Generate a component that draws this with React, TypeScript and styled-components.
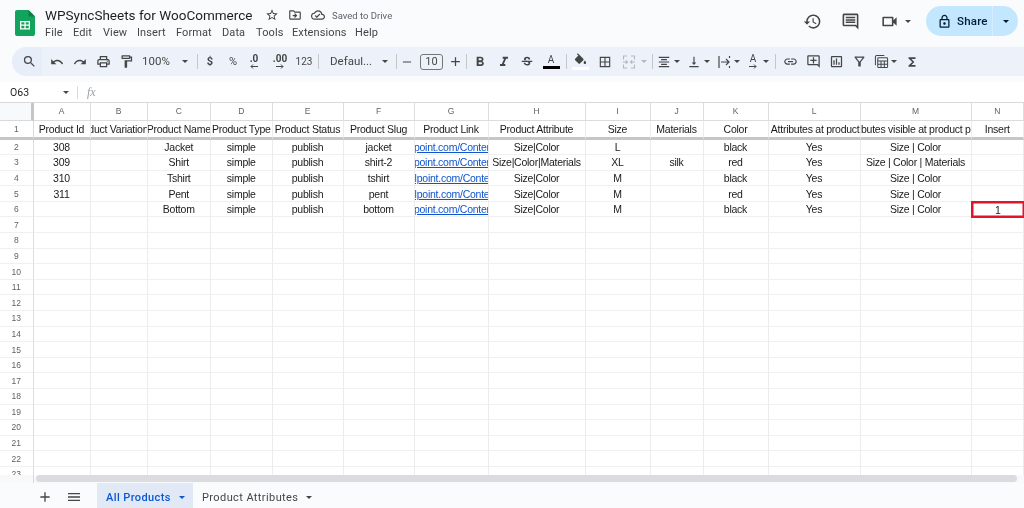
import React from "react";
import styled, { createGlobalStyle } from "styled-components";
import {
  MdSearch, MdUndo, MdRedo, MdOutlinePrint, MdOutlineFormatPaint, MdAdd, MdRemove, MdFormatBold,
  MdFormatItalic, MdStrikethroughS, MdBorderAll, MdFormatAlignCenter, MdVerticalAlignBottom, MdLink,
  MdOutlineAddComment, MdOutlineInsertChart, MdOutlineFilterAlt, MdFunctions, MdHistory, MdOutlineComment,
  MdOutlineVideocam, MdOutlineLock, MdStarBorder, MdOutlineDriveFileMove, MdOutlineCloudDone, MdMenu,
} from "react-icons/md";

const Global = createGlobalStyle`
  html, body { margin: 0; padding: 0; background: #fff; overflow: hidden; }
  * { box-sizing: border-box; }
`;

const Page = styled.div`
  width: 1024px; height: 508px; overflow: hidden; display: flex; flex-direction: column;
  background: #f9fbfd; font-family: Roboto, "Open Sans", sans-serif; color: #1f1f1f;
  filter: blur(0.3px);
`;
const Header = styled.header`
  height: 47px; flex: none; display: flex; align-items: flex-start; padding: 5px 6px 0 15px;
`;
const LogoWrap = styled.div`margin-top: 5px; width: 20px; height: 26px; flex: none;`;
const TitleCol = styled.div`margin-left: 10px; display: flex; flex-direction: column;`;
const TitleRow = styled.div`display: flex; align-items: center; height: 20px; color: #444746;`;
const Title = styled.div`
  font-size: 13.5px; color: #1f1f1f; width: 215px; white-space: nowrap;
`;
const TitleIcon = styled.span<{ $w: number; $ml?: number }>`
  display: flex; justify-content: center; align-items: center; width: ${p => p.$w}px;
  margin-left: ${p => p.$ml ?? 0}px; font-size: 14px;
`;
const Saved = styled.span`font-size: 9.5px; color: #5f6368; margin-left: 5px; white-space: nowrap;`;
const MenuRow = styled.nav`display: flex; height: 15px; align-items: center;`;
const MenuItem = styled.span<{ $w: number }>`
  font-size: 11px; color: #444746; width: ${p => p.$w}px; white-space: nowrap; letter-spacing: .1px;
`;
const HeaderRight = styled.div`
  margin-left: auto; margin-top: 1px; display: flex; align-items: center; height: 30px; color: #444746;
`;
const HeadIcon = styled.span<{ $w: number; $ml?: number }>`
  display: flex; align-items: center; justify-content: center; width: ${p => p.$w}px;
  margin-left: ${p => p.$ml ?? 0}px; font-size: 19px;
`;
const SharePill = styled.div`
  margin-left: 14px; width: 92px; height: 30px; background: #c2e7ff; border-radius: 15px;
  display: flex; align-items: center; color: #001d35;
`;
const ShareMain = styled.div`
  width: 67px; height: 30px; display: flex; align-items: center; padding-left: 11px; gap: 5px;
  border-right: 1px solid #d6eeff; font-size: 11.5px; font-weight: 500; letter-spacing: .2px;
`;
const ShareCaret = styled.div`flex: 1; display: flex; justify-content: center;`;

const Caret = styled.i<{ $c?: string; $s?: number }>`
  display: block; width: 0; height: 0; flex: none;
  border-left: ${p => p.$s ?? 3}px solid transparent; border-right: ${p => p.$s ?? 3}px solid transparent;
  border-top: ${p => p.$s ?? 3}px solid ${p => p.$c ?? "#444746"};
`;

const Toolbar = styled.div`
  height: 29px; flex: none; margin-left: 12px; background: #edf2fa; border-radius: 15px 0 0 15px;
  display: flex; align-items: center; color: #444746; padding-left: 3px; overflow: hidden;
`;
const SearchTint = styled.div`
  width: 30px; height: 29px; margin-left: -3px; padding-left: 10px; background: #e8eef9;
  display: flex; align-items: center; flex: none;
`;
const Tool = styled.div<{ $w?: number; $ml?: number; $muted?: boolean }>`
  width: ${p => p.$w ?? 20}px; margin-left: ${p => p.$ml ?? 0}px; flex: none; height: 24px;
  display: flex; align-items: center; justify-content: ${p => ((p.$w ?? 20) > 24 ? "flex-start" : "center")};
  font-size: 14px; color: ${p => (p.$muted ? "#b4b8bb" : "#444746")}; position: relative;
  & > ${Caret} { position: absolute; right: 2px; top: 10px; }
`;
const ToolSlot = styled.span`width: 20px; display: flex; justify-content: center; flex: none;`;
const Sep = styled.div<{ $ml: number }>`
  width: 1px; height: 15px; background: #c7c7c7; flex: none; margin-left: ${p => p.$ml}px;
`;
const ToolText = styled.span<{ $s?: number; $b?: boolean }>`
  font-size: ${p => p.$s ?? 11}px; font-weight: ${p => (p.$b ? 700 : 400)}; color: #444746; white-space: nowrap; line-height: 1;
`;
const Stack = styled.span`
  display: flex; flex-direction: column; align-items: center; line-height: 1;
`;
const SizeBox = styled.div`
  width: 23px; height: 16px; margin-left: 4px; flex: none; border: 1px solid #747775; border-radius: 3px;
  font-size: 11px; display: flex; align-items: center; justify-content: center; color: #444746;
`;
const TextColorBar = styled.i<{ $c: string; $w: number }>`
  display: block; width: ${p => p.$w}px; height: 3px; background: ${p => p.$c}; margin-top: 1px;
`;

const FormulaBar = styled.div`
  height: 21px; flex: none; margin-top: 6px; background: #fff; border-bottom: 1px solid #d9d9d9;
  display: flex; align-items: center; padding-left: 10px;
`;
const NameBox = styled.div`width: 53px; font-size: 10.5px; color: #1f1f1f;`;
const FxSep = styled.div`width: 1px; height: 13px; background: #d9d9d9; margin-left: 8px;`;
const Fx = styled.span`
  font-family: "Liberation Serif", serif; font-style: italic; font-size: 12px; color: #9aa0a6; margin-left: 9px;
`;

const columns = [33.5, 57, 57, 63.5, 61.5, 71, 71, 74, 97, 65, 53, 65, 92, 111, 52.5];
const Grid = styled.div`
  flex: none; height: 372px; overflow: hidden; background: #fff; display: grid;
  grid-template-columns: ${columns.map(c => c + "px").join(" ")};
  grid-template-rows: 17.5px 19px;
  grid-auto-rows: 15.6px; align-content: start;
`;
const Corner = styled.div`
  background: #f8f9fa; border-right: 3px solid #c4c7c5; border-bottom: 1px solid #d9d9d9;
`;
const ColHead = styled.div`
  font-family: "Liberation Sans", sans-serif; font-size: 8.5px; color: #5f6368;
  display: flex; align-items: center; justify-content: center;
  border-right: 1px solid #dcdcdc; border-bottom: 1px solid #dcdcdc; background: #fff;
`;
const RowNum = styled.div<{ $top?: boolean }>`
  font-family: "Liberation Sans", sans-serif; font-size: 8.5px; color: #5f6368;
  display: flex; align-items: center; justify-content: center; background: #fff;
  border-right: 1px solid #dcdcdc; border-bottom: ${p => (p.$top ? "3px solid #c4c7c5" : "1px solid #f0f0f0")};
`;
const Cell = styled.div<{ $top?: boolean; $link?: boolean; $sel?: boolean }>`
  font-family: "Liberation Sans", sans-serif; font-size: 10.5px; letter-spacing: -0.25px;
  color: ${p => (p.$link ? "#1155cc" : "#1a1a1a")}; text-decoration: ${p => (p.$link ? "underline" : "none")};
  display: flex; align-items: center; justify-content: center; white-space: pre; overflow: hidden;
  border-right: 1px solid #ececec; border-bottom: ${p => (p.$top ? "3px solid #c4c7c5" : "1px solid #f0f0f0")};
  ${p => p.$sel && "overflow: visible; position: relative; z-index: 1; border: 0; box-shadow: inset 0 0 0 1.5px #e2142d, 0 0 0 1px #e2142d;"}
`;

const ScrollRow = styled.div`height: 8px; flex: none; display: flex; background: #f8f9fa;`;
const ScrollCorner = styled.div`width: 33.5px; border-right: 1px solid #d9d9d9;`;
const ScrollThumb = styled.div`
  margin: 0 7px 1px 2.5px; flex: 1; background: #dadce0; border-radius: 4px;
`;
const Bottom = styled.footer`
  flex: 1; display: flex; align-items: stretch; background: #f9fbfd; color: #444746; padding-left: 36px;
`;
const BottomIcon = styled.span<{ $ml?: number }>`
  width: 18px; margin-left: ${p => p.$ml ?? 0}px; padding-top: 3px;
  display: flex; align-items: center; justify-content: center; font-size: 16px;
`;
const Tab = styled.div<{ $active?: boolean; $w: number; $ml?: number }>`
  width: ${p => p.$w}px; margin-left: ${p => p.$ml ?? 0}px; display: flex; align-items: center;
  padding: 3px 0 0 9px; gap: 8px;
  background: ${p => (p.$active ? "#e1e9f7" : "transparent")}; color: ${p => (p.$active ? "#0b57d0" : "#444746")};
  font-size: 11px; font-weight: ${p => (p.$active ? 500 : 400)}; letter-spacing: .4px; white-space: nowrap;
`;

const SheetsLogo = () => (
  <svg width="20" height="26" viewBox="0 0 20 26">
    <path d="M2 0h11.5L20 6.5V24a2 2 0 0 1-2 2H2a2 2 0 0 1-2-2V2a2 2 0 0 1 2-2z" fill="#12a35c" />
    <path d="M13.5 0L20 6.5h-5a1.5 1.5 0 0 1-1.5-1.5z" fill="#0c7f46" />
    <path d="M5 11h10v8.5H5z M6.3 12.3v2.2h3.1v-2.2z M10.7 12.3v2.2h3v-2.2z M6.3 15.7v2.5h3.1v-2.5z M10.7 15.7v2.5h3v-2.5z" fill="#fff" fillRule="evenodd" />
  </svg>
);
const FillIcon = () => (
  <svg width="15" height="13" viewBox="0 0 24 20" fill="#444746">
    <path d="M16.56 8.94L7.62 0 6.21 1.41l2.38 2.38-5.15 5.15c-.59.59-.59 1.54 0 2.12l5.5 5.5c.29.29.68.44 1.06.44s.77-.15 1.06-.44l5.5-5.5c.59-.58.59-1.53 0-2.12z" />
    <path d="M19 11.5s-2 2.17-2 3.5c0 1.1.9 2 2 2s2-.9 2-2c0-1.33-2-3.5-2-3.5z" />
  </svg>
);
const MergeIcon = () => (
  <svg width="14" height="14" viewBox="0 0 14 14" fill="none" stroke="#b4b8bb" strokeWidth="1.1">
    <path d="M5 1H1.5v3.5M9 1h3.5v3.5M5 13H1.5V9.5M9 13h3.5V9.5M1 7h4M9 7h4M3.8 5.3L5.5 7 3.8 8.7M10.2 5.3L8.5 7l1.7 1.7" />
  </svg>
);
const WrapIcon = () => (
  <svg width="14" height="14" viewBox="0 0 14 14" fill="none" stroke="#444746" strokeWidth="1.2">
    <path d="M2 1v12M4 7h8M9 4l3 3-3 3" />
    <path d="M12.5 1v2M12.5 11v2" />
  </svg>
);
const ArrowSmall = ({ left }: { left?: boolean }) => (
  <svg width="10" height="5" viewBox="0 0 10 5" fill="none" stroke="#444746" strokeWidth="1">
    {left ? <path d="M9 2.5H2M4 .5L2 2.5l2 2" /> : <path d="M1 2.5h7M6 .5l2 2-2 2" />}
  </svg>
);
const TableIcon = () => (
  <svg width="15" height="15" viewBox="0 0 16 16" fill="none" stroke="#444746" strokeWidth="1.1">
    <path d="M1.5 12V3A1.5 1.5 0 0 1 3 1.5h8" />
    <rect x="4" y="4" width="10.5" height="10.5" rx="1" />
    <path d="M4 7.5h10.5M4 11h10.5M7.5 7.5v7M11 7.5v7" />
  </svg>
);

const letters = "ABCDEFGHIJKLMN".split("");
const pad = "\u00a0".repeat(6);
const headers = ["Product Id", "Product Variation" + pad, "Product Name", "Product Type", "Product Status", "Product Slug", "Product Link", "Product Attribute", "Size", "Materials", "Color", "Show Attributes at product page", "Attributes visible at product page", "Insert"];
const link = "https://www.example-tutorialspoint.com/Content/uploads/2024/06/image.jpg";
const linkB = "https://www.example-tutorialpoint.com/Content/uploads/2024/06/a1a.jpg";
const data: string[][] = [
  ["308", "", "Jacket", "simple", "publish", "jacket", link, "Size|Color", "L", "", "black", "Yes", "Size | Color", ""],
  ["309", "", "Shirt", "simple", "publish", "shirt-2", link, "Size|Color|Materials", "XL", "silk", "red", "Yes", "Size | Color | Materials", ""],
  ["310", "", "Tshirt", "simple", "publish", "tshirt", linkB, "Size|Color", "M", "", "black", "Yes", "Size | Color", ""],
  ["311", "", "Pent", "simple", "publish", "pent", linkB, "Size|Color", "M", "", "red", "Yes", "Size | Color", ""],
  ["", "", "Bottom", "simple", "publish", "bottom", link, "Size|Color", "M", "", "black", "Yes", "Size | Color", "1"],
];

export default function App() {
  const menu: [string, number][] = [["File", 28], ["Edit", 30], ["View", 34], ["Insert", 39], ["Format", 46], ["Data", 34], ["Tools", 36], ["Extensions", 63], ["Help", 30]];
  return (
    <Page>
      <Global />
      <Header>
        <LogoWrap><SheetsLogo /></LogoWrap>
        <TitleCol>
          <TitleRow>
            <Title>WPSyncSheets for WooCommerce</Title>
            <TitleIcon $w={16} $ml={4}><MdStarBorder /></TitleIcon>
            <TitleIcon $w={16} $ml={7}><MdOutlineDriveFileMove /></TitleIcon>
            <TitleIcon $w={18} $ml={6}><MdOutlineCloudDone /></TitleIcon>
            <Saved>Saved to Drive</Saved>
          </TitleRow>
          <MenuRow>
            {menu.map(([m, w]) => <MenuItem key={m} $w={w}>{m}</MenuItem>)}
          </MenuRow>
        </TitleCol>
        <HeaderRight>
          <HeadIcon $w={22} $ml={0}><MdHistory /></HeadIcon>
          <HeadIcon $w={22} $ml={16}><MdOutlineComment /></HeadIcon>
          <HeadIcon $w={20} $ml={18}><MdOutlineVideocam /></HeadIcon>
          <HeadIcon $w={8} $ml={5}><Caret /></HeadIcon>
          <SharePill>
            <ShareMain><MdOutlineLock size={15} /><span>Share</span></ShareMain>
            <ShareCaret><Caret $c="#001d35" /></ShareCaret>
          </SharePill>
        </HeaderRight>
      </Header>

      <Toolbar>
        <SearchTint><MdSearch size={15} /></SearchTint>
        <Tool $ml={5}><MdUndo /></Tool>
        <Tool $ml={2.5}><MdRedo /></Tool>
        <Tool $ml={3.5}><MdOutlinePrint size={15} /></Tool>
        <Tool $ml={3}><MdOutlineFormatPaint size={15} /></Tool>
        <Tool $w={48} $ml={6}><ToolText $s={11.5}>100%</ToolText><Caret /></Tool>
        <Sep $ml={7} />
        <Tool $ml={2}><ToolText $s={11} $b>$</ToolText></Tool>
        <Tool $ml={3}><ToolText $s={11}>%</ToolText></Tool>
        <Tool $ml={1}><Stack><ToolText $s={10} $b>.0</ToolText><ArrowSmall left /></Stack></Tool>
        <Tool $ml={6}><Stack><ToolText $s={10} $b>.00</ToolText><ArrowSmall /></Stack></Tool>
        <Tool $ml={4}><ToolText $s={10}>123</ToolText></Tool>
        <Sep $ml={4} />
        <Tool $w={60} $ml={11}><ToolText $s={11.5}>Defaul...</ToolText><Caret /></Tool>
        <Sep $ml={6} />
        <Tool $w={18} $ml={1}><MdRemove /></Tool>
        <SizeBox>10</SizeBox>
        <Tool $w={18} $ml={3}><MdAdd size={15} /></Tool>
        <Sep $ml={2} />
        <Tool $ml={3}><MdFormatBold size={16} /></Tool>
        <Tool $ml={4}><MdFormatItalic size={16} /></Tool>
        <Tool $ml={3}><MdStrikethroughS size={14} /></Tool>
        <Tool $ml={4}><Stack><ToolText $s={10}>A</ToolText><TextColorBar $c="#000" $w={17} /></Stack></Tool>
        <Sep $ml={5} />
        <Tool $ml={3}><Stack><FillIcon /><TextColorBar $c="#fff" $w={17} /></Stack></Tool>
        <Tool $ml={5}><MdBorderAll size={14} /></Tool>
        <Tool $w={30} $ml={4} $muted><ToolSlot><MergeIcon /></ToolSlot><Caret $c="#b4b8bb" /></Tool>
        <Sep $ml={3} />
        <Tool $w={28} $ml={1}><ToolSlot><MdFormatAlignCenter size={14} /></ToolSlot><Caret /></Tool>
        <Tool $w={28} $ml={2}><ToolSlot><MdVerticalAlignBottom size={14} /></ToolSlot><Caret /></Tool>
        <Tool $w={28} $ml={2}><ToolSlot><WrapIcon /></ToolSlot><Caret /></Tool>
        <Tool $w={28} $ml={1}><ToolSlot><Stack><ToolText $s={10}>A</ToolText><ArrowSmall /></Stack></ToolSlot><Caret /></Tool>
        <Sep $ml={4} />
        <Tool $ml={4}><MdLink size={15} /></Tool>
        <Tool $ml={3}><MdOutlineAddComment size={15} /></Tool>
        <Tool $ml={3}><MdOutlineInsertChart size={15} /></Tool>
        <Tool $ml={3}><MdOutlineFilterAlt size={15} /></Tool>
        <Tool $w={28} $ml={2}><ToolSlot><TableIcon /></ToolSlot><Caret /></Tool>
        <Tool $ml={3}><MdFunctions size={14} /></Tool>
      </Toolbar>

      <FormulaBar>
        <NameBox>O63</NameBox>
        <Caret />
        <FxSep />
        <Fx>fx</Fx>
      </FormulaBar>

      <Grid>
        <Corner />
        {letters.map(l => <ColHead key={l}>{l}</ColHead>)}
        <RowNum $top>1</RowNum>
        {headers.map(h => <Cell key={h} $top>{h}</Cell>)}
        {data.map((row, r) => (
          <React.Fragment key={r}>
            <RowNum>{r + 2}</RowNum>
            {row.map((v, c) => (
              <Cell key={c} $link={c === 6} $sel={c === 13 && r === 4}>{v}</Cell>
            ))}
          </React.Fragment>
        ))}
        {Array.from({ length: 17 }, (_, r) => (
          <React.Fragment key={r}>
            <RowNum>{r + 7}</RowNum>
            {letters.map(l => <Cell key={l} />)}
          </React.Fragment>
        ))}
      </Grid>

      <ScrollRow>
        <ScrollCorner />
        <ScrollThumb />
      </ScrollRow>

      <Bottom>
        <BottomIcon><MdAdd /></BottomIcon>
        <BottomIcon $ml={11}><MdMenu /></BottomIcon>
        <Tab $active $w={96} $ml={14}>All Products<Caret $c="#0b57d0" /></Tab>
        <Tab $w={130}>Product Attributes<Caret /></Tab>
      </Bottom>
    </Page>
  );
}
